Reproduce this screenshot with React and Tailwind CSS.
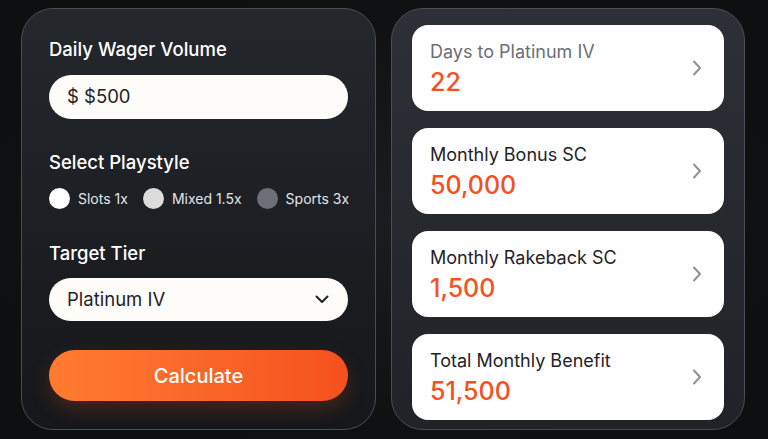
import React, { useState } from 'react';

const results = [
  { label: 'Days to Platinum IV', value: '22', muted: true },
  { label: 'Monthly Bonus SC', value: '50,000' },
  { label: 'Monthly Rakeback SC', value: '1,500' },
  { label: 'Total Monthly Benefit', value: '51,500' },
];

const playstyles = [
  { id: 'slots', label: 'Slots 1x', dot: 'bg-white' },
  { id: 'mixed', label: 'Mixed 1.5x', dot: 'bg-[#dcdcdc]' },
  { id: 'sports', label: 'Sports 3x', dot: 'bg-[#6c6f76]' },
];

const ChevronRight = () => (
  <svg width="10" height="16" viewBox="0 0 10 16" fill="none">
    <path d="M2 1.5l6 6.5-6 6.5" stroke="#8e9197" strokeWidth="2" strokeLinecap="round" strokeLinejoin="round" />
  </svg>
);

const ChevronDown = () => (
  <svg width="14" height="9" viewBox="0 0 14 9" fill="none">
    <path d="M1.5 1.5L7 7l5.5-5.5" stroke="#1f2328" strokeWidth="2" strokeLinecap="round" strokeLinejoin="round" />
  </svg>
);

export default function App() {
  const [playstyle, setPlaystyle] = useState('slots');

  return (
    <div
      className="w-[768px] h-[439px] overflow-hidden bg-[radial-gradient(ellipse_at_center,#1b1c1f_0%,#0e0f11_75%)] pl-[21px] pt-2 flex gap-[15px]"
      style={{ fontFamily: 'Inter, "Noto Sans", sans-serif' }}
    >
      {/* Calculator form */}
      <div className="w-[355px] h-[422px] rounded-[32px] border border-[#4a4d53] bg-gradient-to-b from-[#24272c] to-[#15171a] px-[27px] pt-[26px] flex flex-col">
        <div className="text-[18.5px] leading-7 font-medium text-white">Daily Wager Volume</div>
        <div className="mt-3 h-11 rounded-full bg-[#fdfcf9] flex items-center px-[18px] text-[18.5px] text-[#1f2328]">
          $ $500
        </div>

        <div className="mt-[29px] text-[18.5px] leading-7 font-medium text-white">Select Playstyle</div>
        <div className="mt-3 h-[21px] flex items-center whitespace-nowrap">
          {playstyles.map((p) => (
            <button
              key={p.id}
              onClick={() => setPlaystyle(p.id)}
              className="flex items-center gap-2 mr-[15px] last:mr-0 shrink-0"
            >
              <span className={`w-[21px] h-[21px] shrink-0 rounded-full ${p.dot}`}></span>
              <span className="text-[14px] text-[#e4e5e7]">{p.label}</span>
            </button>
          ))}
        </div>

        <div className="mt-[30px] text-[18.5px] leading-7 font-medium text-white">Target Tier</div>
        <div className="mt-[11px] h-[43px] rounded-full bg-[#fdfcf9] flex items-center justify-between pl-[18px] pr-[19px] text-[18.5px] text-[#1f2328]">
          <span>Platinum IV</span>
          <ChevronDown />
        </div>

        <button className="mt-[29px] h-[51px] rounded-full bg-gradient-to-r from-[#ff7b30] to-[#f5501e] text-white text-[20px] font-medium shadow-[0_8px_20px_rgba(245,90,30,0.22)]">
          Calculate
        </button>
      </div>

      {/* Results */}
      <div className="w-[354px] h-[422px] rounded-[32px] border border-[#4a4d53] bg-gradient-to-b from-[#2d3036] to-[#202227] px-[20px] pt-[16px] flex flex-col gap-[17px]">
        {results.map((r) => (
          <div key={r.label} className="h-[86px] shrink-0 rounded-[16px] bg-white flex items-center justify-between pl-[18px] pr-[22px]">
            <div className="flex flex-col">
              <span className={`text-[18px] leading-7 ${r.muted ? 'text-[#6b6f76]' : 'text-[#1f2328]'}`}>{r.label}</span>
              <span className="text-[25px] leading-8 font-medium text-[#f5511f]">{r.value}</span>
            </div>
            <ChevronRight />
          </div>
        ))}
      </div>
    </div>
  );
}
